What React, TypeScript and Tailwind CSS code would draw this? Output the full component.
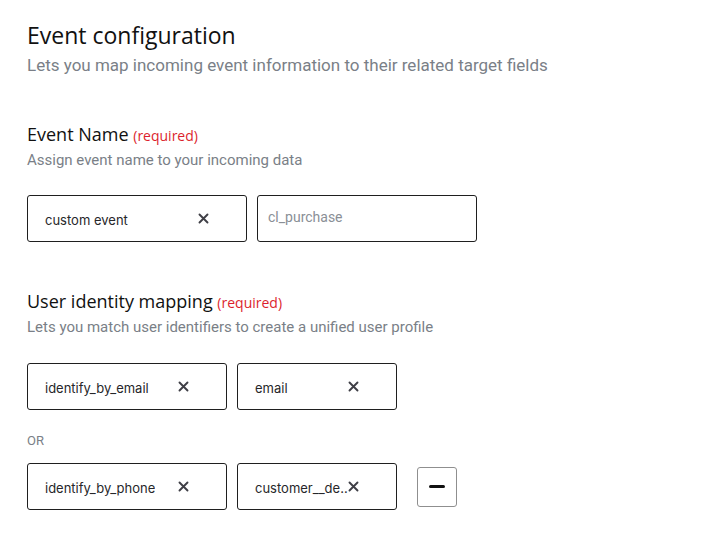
import React from 'react';

const sans = "font-['Roboto',sans-serif]";
const head = "font-['Open_Sans',sans-serif]";
const inter = "font-['Inter',sans-serif]";

const ClearIcon: React.FC = () => (
  <svg width="11" height="11" viewBox="0 0 11 11" className="shrink-0">
    <path d="M1.5 1.5 L9.5 9.5 M9.5 1.5 L1.5 9.5" stroke="#3f3f46" strokeWidth="1.9" strokeLinecap="round" />
  </svg>
);

const TagInput: React.FC<{ value: string; width: string }> = ({ value, width }) => (
  <div
    className={`${width} h-[47px] flex items-center justify-between rounded-[3px] border border-[#1f1f1f] bg-white pl-[17px] pr-[37px]`}
  >
    <span className={`${inter} text-[13px] text-[#27272a] truncate mt-[4px]`}>{value}</span>
    <ClearIcon />
  </div>
);

const SectionTitle: React.FC<{ title: string; desc: string }> = ({ title, desc }) => (
  <div>
    <h2 className={`${head} text-[18px] font-medium text-[#111] leading-[22px]`}>
      {title} <span className="text-[14px] text-[#dc1f2e]">(required)</span>
    </h2>
    <p className={`${sans} text-[15px] text-[#7a7f87] leading-[20px] mt-[3px]`}>{desc}</p>
  </div>
);

export default function App() {
  return (
    <div className="w-[724px] h-[533px] bg-white px-[27px] pt-[21px]">
      <h1 className={`${head} text-[23px] text-[#111] leading-[29px]`}>Event configuration</h1>
      <p className={`${sans} text-[17px] text-[#7a7f87] leading-[22px] mt-[4px]`}>
        Lets you map incoming event information to their related target fields
      </p>

      <div className="mt-[47px]">
        <SectionTitle title="Event Name" desc="Assign event name to your incoming data" />
        <div className="flex gap-[10px] mt-[25px]">
          <TagInput value="custom event" width="w-[220px]" />
          <div className="w-[220px] h-[47px] flex items-center rounded-[3px] border border-[#1f1f1f] bg-white pl-[10px] pb-[2px]">
            <span className={`${sans} text-[14px] text-[#8a8f96]`}>cl_purchase</span>
          </div>
        </div>
      </div>

      <div className="mt-[48px]">
        <SectionTitle title="User identity mapping" desc="Lets you match user identifiers to create a unified user profile" />
        <div className="flex gap-[10px] mt-[26px]">
          <TagInput value="identify_by_email" width="w-[200px]" />
          <TagInput value="email" width="w-[160px]" />
        </div>
        <p className={`${sans} text-[13px] text-[#7a7f87] mt-[22px] leading-[18px]`}>OR</p>
        <div className="flex items-center gap-[10px] mt-[13px]">
          <TagInput value="identify_by_phone" width="w-[200px]" />
          <div className="w-[160px] h-[47px] flex items-center rounded-[3px] border border-[#1f1f1f] bg-white pl-[17px] pr-[37px]">
            <span className={`${inter} text-[13px] text-[#27272a] whitespace-nowrap mt-[4px]`}>customer__de..</span>
            <ClearIcon />
          </div>
          <button className="ml-[10px] w-[40px] h-[40px] flex items-center justify-center rounded-[3px] border border-[#8f8f8f] bg-white">
            <span className="block w-[16px] h-[3px] rounded-full bg-[#111]" />
          </button>
        </div>
      </div>
    </div>
  );
}
